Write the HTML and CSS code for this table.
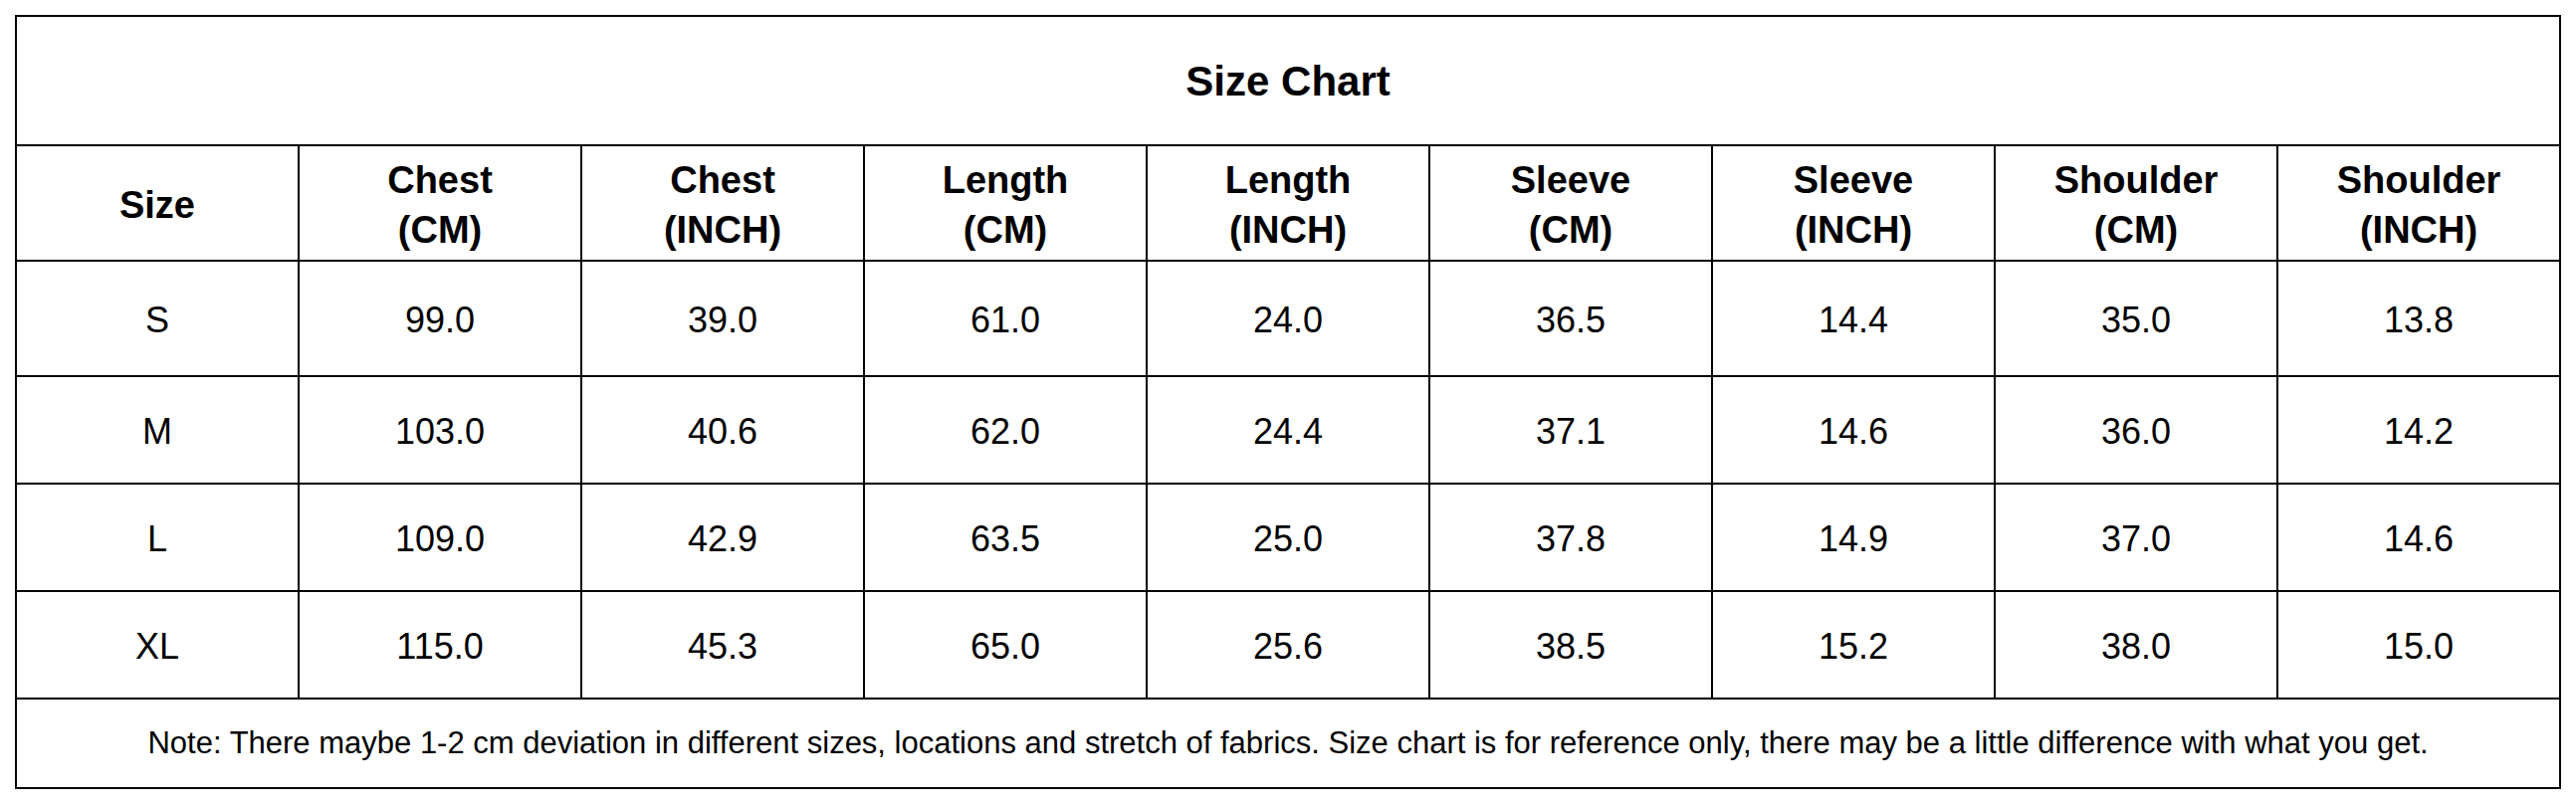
FILE: index.html
```html
<!DOCTYPE html>
<html>
<head>
<meta charset="utf-8">
<link rel="stylesheet" href="styles.css">
</head>
<body>
<table class="chart">
  <colgroup>
    <col class="c"><col class="c"><col class="c"><col class="c"><col class="c"><col class="c"><col class="c"><col class="c"><col class="c">
  </colgroup>
  <tr class="title-row"><td colspan="9" class="title">Size Chart</td></tr>
  <tr class="head-row">
    <th>Size</th>
    <th>Chest<br>(CM)</th>
    <th>Chest<br>(INCH)</th>
    <th>Length<br>(CM)</th>
    <th>Length<br>(INCH)</th>
    <th>Sleeve<br>(CM)</th>
    <th>Sleeve<br>(INCH)</th>
    <th>Shoulder<br>(CM)</th>
    <th>Shoulder<br>(INCH)</th>
  </tr>
  <tr class="row first"><td>S</td><td>99.0</td><td>39.0</td><td>61.0</td><td>24.0</td><td>36.5</td><td>14.4</td><td>35.0</td><td>13.8</td></tr>
  <tr class="row"><td>M</td><td>103.0</td><td>40.6</td><td>62.0</td><td>24.4</td><td>37.1</td><td>14.6</td><td>36.0</td><td>14.2</td></tr>
  <tr class="row"><td>L</td><td>109.0</td><td>42.9</td><td>63.5</td><td>25.0</td><td>37.8</td><td>14.9</td><td>37.0</td><td>14.6</td></tr>
  <tr class="row"><td>XL</td><td>115.0</td><td>45.3</td><td>65.0</td><td>25.6</td><td>38.5</td><td>15.2</td><td>38.0</td><td>15.0</td></tr>
  <tr class="note-row"><td colspan="9" class="note">Note: There maybe 1-2 cm deviation in different sizes, locations and stretch of fabrics. Size chart is for reference only, there may be a little difference with what you get.</td></tr>
</table>
</body>
</html>
```

FILE: styles.css
```css
html, body {
  margin: 0;
  padding: 0;
  background: #fff;
}
body {
  padding: 15px 0 0 15px;
  font-family: "Liberation Sans", Arial, sans-serif;
  color: #000;
}
.chart {
  border-collapse: collapse;
  table-layout: fixed;
  width: 2558px;
}
.chart col.c {
  width: 284px;
}
.chart td, .chart th {
  border: 2px solid #000;
  padding: 0;
  text-align: center;
  vertical-align: middle;
}
.title-row td {
  height: 126px;
  padding-top: 2px;
  font-size: 42px;
  font-weight: bold;
}
.head-row th {
  height: 110px;
  padding-top: 4px;
  font-size: 38px;
  font-weight: bold;
  line-height: 50px;
}
.row td {
  height: 102px;
  padding-top: 4px;
  font-size: 36px;
}
.row.first td {
  height: 110px;
}
.note-row td {
  height: 88px;
  font-size: 31px;
}
```
